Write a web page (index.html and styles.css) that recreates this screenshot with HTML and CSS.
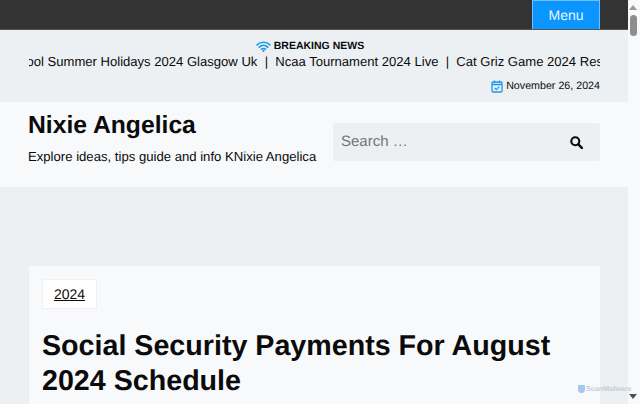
FILE: index.html
```html
<!DOCTYPE html>
<html lang="en">
<head>
<meta charset="utf-8">
<title>Nixie Angelica</title>
<link rel="stylesheet" href="styles.css">
</head>
<body>
<div class="page">
  <div class="topbar"><div class="wrap topbar-in"><button class="menu-btn">Menu</button></div></div>
  <section class="news">
    <div class="wrap">
      <div class="breaking">
        <svg class="wifi" viewBox="0 0 16 12" width="15" height="11"><path d="M1 4.2C5 .4 11 .4 15 4.2M3.4 6.7c2.700-2.500 6.500-2.500 9.200 0M5.800 9c1.300-1 3.100-1 4.400 0" fill="none" stroke="#1c97ee" stroke-width="1.800" stroke-linecap="round"/><circle cx="8" cy="10.800" r="1.200" fill="#1c97ee"/></svg>
        <span>BREAKING NEWS</span>
      </div>
      <div class="ticker"><div class="track">School Summer Holidays 2024 Glasgow Uk &nbsp;|&nbsp; Ncaa Tournament 2024 Live &nbsp;|&nbsp; Cat Griz Game 2024 Results</div></div>
      <div class="date">
        <svg viewBox="0 0 12 13" width="12" height="13"><rect x="1" y="2" width="10" height="10" rx="1" fill="none" stroke="#1c97ee" stroke-width="1.300"/><path d="M1 4.500h10M3.500.5v2.500M8.500.5v2.500" stroke="#1c97ee" stroke-width="1.300" fill="none"/><path d="M3.700 8l1.600 1.600 3-3" stroke="#1c97ee" stroke-width="1.200" fill="none"/></svg>
        <span>November 26, 2024</span>
      </div>
    </div>
  </section>
  <header class="site-head">
    <div class="wrap head-in">
      <div class="brand">
        <h1>Nixie Angelica</h1>
        <p>Explore ideas, tips guide and info KNixie Angelica</p>
      </div>
      <form class="search">
        <span class="placeholder">Search …</span>
        <svg viewBox="0 0 14 14" width="13" height="13"><circle cx="5.700" cy="5.700" r="4.300" fill="none" stroke="#0b0b0b" stroke-width="2.300"/><path d="M9 9l4 4" stroke="#0b0b0b" stroke-width="2.600" stroke-linecap="round"/></svg>
      </form>
    </div>
  </header>
  <main class="content">
    <article class="card">
      <a class="tag" href="#">2024</a>
      <h2>Social Security Payments For August 2024 Schedule</h2>
    </article>
  </main>
</div>
<aside class="scrollbar">
  <span class="arrow-up"></span>
  <span class="thumb"></span>
  <span class="arrow-down"></span>
</aside>
<div class="badge"><span class="shield"></span>ScanMalware</div>
</body>
</html>
```
FILE: styles.css
```css
* { box-sizing: border-box; }
html, body { margin: 0; height: 404px; overflow: hidden; }
body { display: flex; width: 640px; font-family: "Liberation Sans", Arial, sans-serif; color: #0b0b0b; background: #f8f9fb; text-rendering: geometricPrecision; }
.page { width: 628px; height: 404px; overflow: hidden; flex: none; }
.wrap { width: 572px; margin-left: 28px; }

.topbar { height: 30px; background: #333; border-bottom: 1px solid #555; }
.topbar-in { display: flex; justify-content: flex-end; }
.menu-btn { width: 68px; height: 29px; padding: 0; border: 1px solid #6fc0ff; border-bottom: 0; background: #0a95ff; color: #e8f5ff; font: 14px "Liberation Sans", Arial, sans-serif; text-rendering: geometricPrecision; }

.news { height: 72px; background: #ecf0f3; padding-top: 9px; }
.breaking { display: flex; justify-content: center; align-items: center; gap: 3px; height: 14px; font-size: 10.500px; font-weight: 700; padding-right: 8px; }
.ticker { overflow: hidden; white-space: nowrap; font-size: 13.070px; line-height: 16px; height: 16px; margin: 1px 0 0 1px; }
.track { margin-left: -25px; width: 800px; }
.date { display: flex; justify-content: flex-end; align-items: center; gap: 3px; margin-top: 9px; font-size: 10.700px; height: 14px; }

.site-head { height: 85px; background: #f8f9fb; }
.head-in { display: flex; justify-content: space-between; align-items: flex-start; padding-top: 9px; }
.brand h1 { margin: 0; font-size: 24.700px; line-height: 30px; font-weight: 700; }
.brand p { margin: 8px 0 0; font-size: 13.130px; line-height: 16px; white-space: nowrap; }
.search { width: 267px; height: 38px; margin-top: 12px; background: #ecf0f3; border-radius: 2px; display: flex; align-items: center; justify-content: space-between; padding: 0 17px 2px 8px; }
.search svg { margin-top: 2px; }
.placeholder { font-size: 15px; color: #757575; }

.content { background: #ecf0f3; padding: 79px 0 0 29px; }
.card { width: 571px; height: 200px; background: #f8f9fb; padding: 13px; }
.tag { display: inline-block; width: 55px; height: 30px; line-height: 28px; text-align: center; background: #fff; border: 1px solid #eef0f4; color: #0b0b0b; font-size: 14px; text-decoration: underline; }
h2 { margin: 20px 0 0; font-size: 28.650px; line-height: 35px; font-weight: 700; }

.badge { position: absolute; left: 578px; top: 384px; display: flex; align-items: center; gap: 1px; font-size: 7.200px; font-weight: 700; color: #c3ccd8; }
.shield { width: 7px; height: 8px; background: #a9c8ef; border-radius: 1px 1px 4px 4px; }

.scrollbar { position: relative; width: 12px; height: 404px; }
.thumb { position: absolute; left: 2px; top: 15px; width: 7px; height: 21px; background: #8d8d8d; border-radius: 4px; }
.arrow-up, .arrow-down { position: absolute; left: 1px; width: 0; height: 0; border-left: 4px solid transparent; border-right: 4px solid transparent; }
.arrow-up { top: 5px; border-bottom: 5px solid #9a9a9a; }
.arrow-down { top: 394px; border-top: 5px solid #505050; }
```
